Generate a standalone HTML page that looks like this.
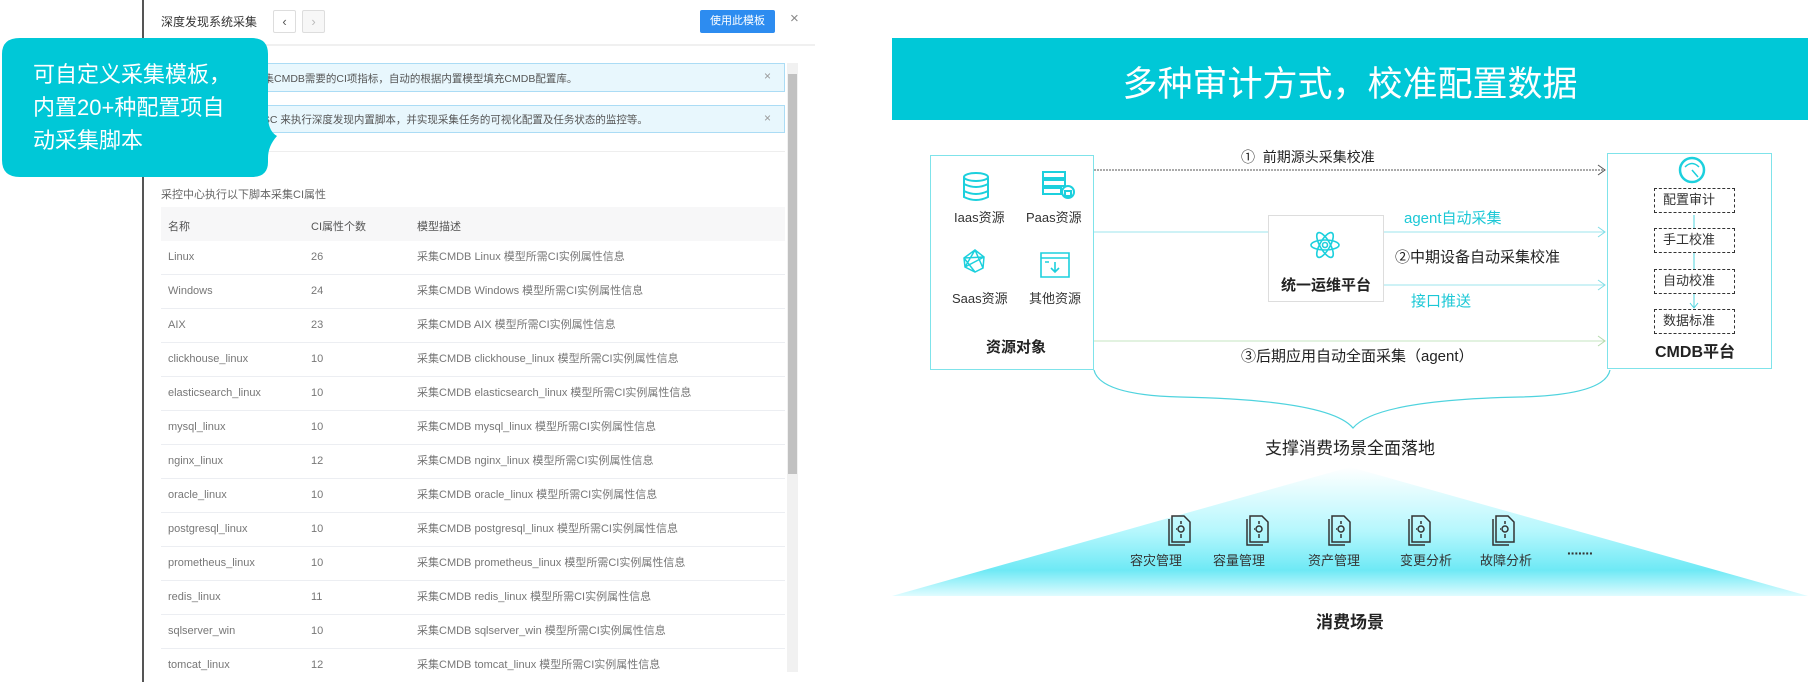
<!DOCTYPE html>
<html><head><meta charset="utf-8"><style>
*{margin:0;padding:0;box-sizing:border-box}
body{width:1808px;height:682px;background:#fff;position:relative;overflow:hidden;font-family:"Liberation Sans","Noto Sans CJK SC",sans-serif}
.a{position:absolute;white-space:nowrap}
.l{font-size:11px;color:#666}
.row{position:absolute;left:161px;width:624px;height:34px;border-bottom:1px solid #eceef2}
.row span{position:absolute;top:0;line-height:33px;font-size:11px;color:#777;white-space:nowrap}
.blk{color:#222;font-size:14px}
.db{position:absolute;left:1654px;width:81px;height:25px;border:1.5px dashed #333;font-size:13px;color:#333;text-align:left;padding-left:8px;line-height:22px}
.lab{font-size:13px;color:#333}
</style></head><body>
<div class="a" style="left:142px;top:0;width:2px;height:682px;background:#555"></div>
<div class="a l" style="left:161px;top:13px;font-size:12px;color:#333">深度发现系统采集</div>
<div class="a" style="left:273px;top:10px;width:23px;height:23px;border:1px solid #ddd;border-radius:2px;text-align:center;line-height:21px;font-size:13px;color:#555">&#8249;</div>
<div class="a" style="left:302px;top:10px;width:23px;height:23px;border:1px solid #ddd;background:#f7f7f7;border-radius:2px;text-align:center;line-height:21px;font-size:13px;color:#bbb">&#8250;</div>
<div class="a" style="left:700px;top:10px;width:75px;height:23px;background:#2d8cf0;color:#fff;font-size:11px;text-align:center;line-height:23px;border-radius:2px">使用此模板</div>
<div class="a" style="left:790px;top:10px;font-size:15px;color:#888">×</div>
<div class="a" style="left:143px;top:44px;width:672px;height:2px;background:#f0f0f0"></div>
<div class="a" style="left:161px;top:63px;width:624px;height:29px;background:#e8f7fd;border:1px solid #abdcf5"></div>
<div class="a l" style="left:232px;top:71px;color:#555;font-size:10.5px">通过采集CMDB需要的CI项指标，自动的根据内置模型填充CMDB配置库。</div>
<div class="a" style="left:764px;top:69px;font-size:12px;color:#999">×</div>
<div class="a" style="left:161px;top:105px;width:624px;height:28px;background:#e8f7fd;border:1px solid #abdcf5"></div>
<div class="a l" style="left:140px;top:112px;color:#555;font-size:10.5px">通过采控中心SaaS-PAAS-SC 来执行深度发现内置脚本，并实现采集任务的可视化配置及任务状态的监控等。</div>
<div class="a" style="left:764px;top:111px;font-size:12px;color:#999">×</div>
<div class="a" style="left:161px;top:151px;width:624px;height:1px;background:#eee"></div>
<div class="a l" style="left:161px;top:186px">采控中心执行以下脚本采集CI属性</div>
<div class="a" style="left:161px;top:207px;width:624px;height:34px;background:#f7f7f8"></div>
<div class="a l" style="left:168px;top:218px;color:#555">名称</div>
<div class="a l" style="left:311px;top:218px;color:#555">CI属性个数</div>
<div class="a l" style="left:417px;top:218px;color:#555">模型描述</div>
<div class="row" style="top:241px"><span style="left:7px">Linux</span><span style="left:150px">26</span><span style="left:256px">采集CMDB Linux 模型所需CI实例属性信息</span></div>
<div class="row" style="top:275px"><span style="left:7px">Windows</span><span style="left:150px">24</span><span style="left:256px">采集CMDB Windows 模型所需CI实例属性信息</span></div>
<div class="row" style="top:309px"><span style="left:7px">AIX</span><span style="left:150px">23</span><span style="left:256px">采集CMDB AIX 模型所需CI实例属性信息</span></div>
<div class="row" style="top:343px"><span style="left:7px">clickhouse_linux</span><span style="left:150px">10</span><span style="left:256px">采集CMDB clickhouse_linux 模型所需CI实例属性信息</span></div>
<div class="row" style="top:377px"><span style="left:7px">elasticsearch_linux</span><span style="left:150px">10</span><span style="left:256px">采集CMDB elasticsearch_linux 模型所需CI实例属性信息</span></div>
<div class="row" style="top:411px"><span style="left:7px">mysql_linux</span><span style="left:150px">10</span><span style="left:256px">采集CMDB mysql_linux 模型所需CI实例属性信息</span></div>
<div class="row" style="top:445px"><span style="left:7px">nginx_linux</span><span style="left:150px">12</span><span style="left:256px">采集CMDB nginx_linux 模型所需CI实例属性信息</span></div>
<div class="row" style="top:479px"><span style="left:7px">oracle_linux</span><span style="left:150px">10</span><span style="left:256px">采集CMDB oracle_linux 模型所需CI实例属性信息</span></div>
<div class="row" style="top:513px"><span style="left:7px">postgresql_linux</span><span style="left:150px">10</span><span style="left:256px">采集CMDB postgresql_linux 模型所需CI实例属性信息</span></div>
<div class="row" style="top:547px"><span style="left:7px">prometheus_linux</span><span style="left:150px">10</span><span style="left:256px">采集CMDB prometheus_linux 模型所需CI实例属性信息</span></div>
<div class="row" style="top:581px"><span style="left:7px">redis_linux</span><span style="left:150px">11</span><span style="left:256px">采集CMDB redis_linux 模型所需CI实例属性信息</span></div>
<div class="row" style="top:615px"><span style="left:7px">sqlserver_win</span><span style="left:150px">10</span><span style="left:256px">采集CMDB sqlserver_win 模型所需CI实例属性信息</span></div>
<div class="row" style="top:649px;border:none"><span style="left:7px">tomcat_linux</span><span style="left:150px">12</span><span style="left:256px">采集CMDB tomcat_linux 模型所需CI实例属性信息</span></div>
<div class="a" style="left:787px;top:63px;width:11px;height:609px;background:#f1f1f1"></div>
<div class="a" style="left:788px;top:74px;width:9px;height:400px;background:#c1c1c1"></div>
<svg class="a" style="left:0;top:36px" width="285" height="144"><path d="M20 2H252Q268 2 268 18V80Q268 95 277 100Q268 110 268 122V126Q268 141 252 141H20Q2 141 2 124V18Q2 2 20 2Z" fill="#00c8d7"/></svg>
<div class="a" style="left:33px;top:58px;color:#fff;font-size:22px;line-height:33px">可自定义采集模板，<br>内置20+种配置项自<br>动采集脚本</div>

<div class="a" style="left:892px;top:38px;width:916px;height:82px;background:#00c8d7"></div>
<div class="a" style="left:892px;top:56px;width:916px;text-align:center;color:#fff;font-size:35px">多种审计方式，校准配置数据</div>
<div class="a" style="left:930px;top:155px;width:164px;height:215px;border:1.5px solid #7fe3ea"></div>
<div class="a" style="left:1607px;top:153px;width:165px;height:216px;border:1.5px solid #7fe3ea"></div>
<svg class="a" style="left:0;top:0" width="1808" height="682">
<line x1="1094" y1="170" x2="1605" y2="170" stroke="#555" stroke-dasharray="2,1" stroke-width="1"/>
<path d="M1598 165L1605 170L1598 175" fill="none" stroke="#555"/>
<line x1="1094" y1="232" x2="1268" y2="232" stroke="#9ee6ec"/>
<line x1="1384" y1="232" x2="1605" y2="232" stroke="#9ee6ec"/>
<path d="M1598 227L1605 232L1598 237" fill="none" stroke="#7fdde5"/>
<line x1="1384" y1="285" x2="1605" y2="285" stroke="#9ee6ec"/>
<path d="M1598 280L1605 285L1598 290" fill="none" stroke="#7fdde5"/>
<line x1="1094" y1="341" x2="1605" y2="341" stroke="#c6e4c0"/>
<path d="M1598 336L1605 341L1598 346" fill="none" stroke="#b4d9ad"/>
<path d="M1094 370Q1100 395 1180 397Q1330 400 1353 428Q1376 400 1520 397Q1605 395 1610 370" fill="none" stroke="#4fd3de" stroke-width="1.2"/>
<line x1="1694" y1="215" x2="1694" y2="228" stroke="#4fd3de"/>
<line x1="1694" y1="253" x2="1694" y2="269" stroke="#4fd3de"/>
<line x1="1694" y1="294" x2="1694" y2="308" stroke="#4fd3de"/>
<path d="M1690 303L1694 308L1698 303" fill="none" stroke="#4fd3de"/>
<defs><linearGradient id="g" x1="0" y1="0" x2="0" y2="1"><stop offset="0" stop-color="#fff"/><stop offset="0.5" stop-color="#b5f7fd"/><stop offset="0.8" stop-color="#6ee9f5"/><stop offset="1" stop-color="#e0fcff"/></linearGradient></defs>
<polygon points="1350,467 1808,596 892,596" fill="url(#g)"/>
<g fill="none" stroke="#1cd0dd" stroke-width="2"><ellipse cx="976" cy="177" rx="12" ry="4"/><path d="M964 177V197Q976 203 988 197V177M964 184Q976 190 988 184M964 191Q976 197 988 191"/></g>
<g fill="none" stroke="#1cd0dd" stroke-width="2"><rect x="1043" y="172" width="22" height="6"/><rect x="1043" y="180" width="22" height="6"/><rect x="1043" y="188" width="18" height="6"/><circle cx="1068" cy="192" r="6"/><rect x="1065" y="191" width="6" height="5"/></g>
<g fill="none" stroke="#1cd0dd" stroke-width="1.5"><path d="M975 250L984 257L983 268L975 272L965 267L964 258Z M975 250L965 267M975 250L983 268M964 258L984 257M964 258L975 272M984 257L965 267"/></g>
<g fill="none" stroke="#1cd0dd" stroke-width="1.6"><path d="M1041 253H1069V277H1041ZM1041 258H1069M1055 262V272M1051 268L1055 272L1059 268M1045 262H1049"/></g>
<g fill="none" stroke="#1cd0dd" stroke-width="2.5"><circle cx="1692" cy="170" r="12"/></g>
<g fill="none" stroke="#1cd0dd" stroke-width="1.5"><path d="M1685 167Q1692 160 1699 167M1692 170L1698 177"/></g>
</svg>
<div class="a" style="left:1268px;top:215px;width:116px;height:87px;border:1px solid #ddd;background:#fff"></div>
<div class="a" style="left:1268px;top:274px;width:116px;text-align:center;font-size:15px;font-weight:bold;color:#222">统一运维平台</div>
<svg class="a" style="left:1305px;top:228px" width="40" height="36"><g fill="none" stroke="#1cd0dd" stroke-width="1.6"><ellipse cx="20" cy="17" rx="14" ry="5"/><ellipse cx="20" cy="17" rx="14" ry="5" transform="rotate(60 20 17)"/><ellipse cx="20" cy="17" rx="14" ry="5" transform="rotate(-60 20 17)"/><circle cx="20" cy="17" r="2.5"/></g></svg>
<div class="a blk" style="left:1241px;top:147px">①&nbsp; 前期源头采集校准</div>
<div class="a" style="left:1404px;top:207px;color:#1cc8d6;font-size:15px">agent自动采集</div>
<div class="a blk" style="left:1395px;top:246px;font-size:15px">②中期设备自动采集校准</div>
<div class="a" style="left:1411px;top:290px;color:#1cc8d6;font-size:15px">接口推送</div>
<div class="a blk" style="left:1241px;top:345px;font-size:15px">③后期应用自动全面采集（agent）</div>
<div class="a lab" style="left:954px;top:207px">Iaas资源</div>
<div class="a lab" style="left:1026px;top:207px">Paas资源</div>
<div class="a lab" style="left:952px;top:288px">Saas资源</div>
<div class="a lab" style="left:1029px;top:288px">其他资源</div>
<div class="a" style="left:986px;top:336px;font-size:15px;font-weight:bold;color:#222">资源对象</div>
<div class="db" style="top:188px">配置审计</div>
<div class="db" style="top:228px">手工校准</div>
<div class="db" style="top:269px">自动校准</div>
<div class="db" style="top:309px">数据标准</div>
<div class="a" style="left:1655px;top:338px;font-size:16px;font-weight:bold;color:#222">CMDB平台</div>
<div class="a" style="left:892px;top:434px;width:916px;text-align:center;font-size:17px;color:#222">支撑消费场景全面落地</div>
<div class="a" style="left:1130px;top:550px;font-size:13px;color:#333">容灾管理</div>
<div class="a" style="left:1213px;top:550px;font-size:13px;color:#333">容量管理</div>
<div class="a" style="left:1308px;top:550px;font-size:13px;color:#333">资产管理</div>
<div class="a" style="left:1400px;top:550px;font-size:13px;color:#333">变更分析</div>
<div class="a" style="left:1480px;top:550px;font-size:13px;color:#333">故障分析</div>
<div class="a" style="left:1567px;top:545px;font-size:14px;color:#333;font-weight:bold;letter-spacing:-1px">·······</div>
<svg class="a" style="left:0;top:0" width="1808" height="682">
<g fill="none" stroke="#333" stroke-width="1.5">
<g transform="translate(1166,515)"><path d="M3 4V30H19"/><path d="M6 1H18L24 7V27H6Z"/><circle cx="15" cy="14" r="3"/><path d="M15 6V9M15 19V23M10 14H11"/></g>
<g transform="translate(1244,515)"><path d="M3 4V30H19"/><path d="M6 1H18L24 7V27H6Z"/><circle cx="15" cy="14" r="3"/><path d="M15 6V9M15 19V23M10 14H11"/></g>
<g transform="translate(1326,515)"><path d="M3 4V30H19"/><path d="M6 1H18L24 7V27H6Z"/><circle cx="15" cy="14" r="3"/><path d="M15 6V9M15 19V23M10 14H11"/></g>
<g transform="translate(1406,515)"><path d="M3 4V30H19"/><path d="M6 1H18L24 7V27H6Z"/><circle cx="15" cy="14" r="3"/><path d="M15 6V9M15 19V23M10 14H11"/></g>
<g transform="translate(1490,515)"><path d="M3 4V30H19"/><path d="M6 1H18L24 7V27H6Z"/><circle cx="15" cy="14" r="3"/><path d="M15 6V9M15 19V23M10 14H11"/></g>
</g></svg>
<div class="a" style="left:892px;top:608px;width:916px;text-align:center;font-size:17px;font-weight:bold;color:#222">消费场景</div>
</body></html>
